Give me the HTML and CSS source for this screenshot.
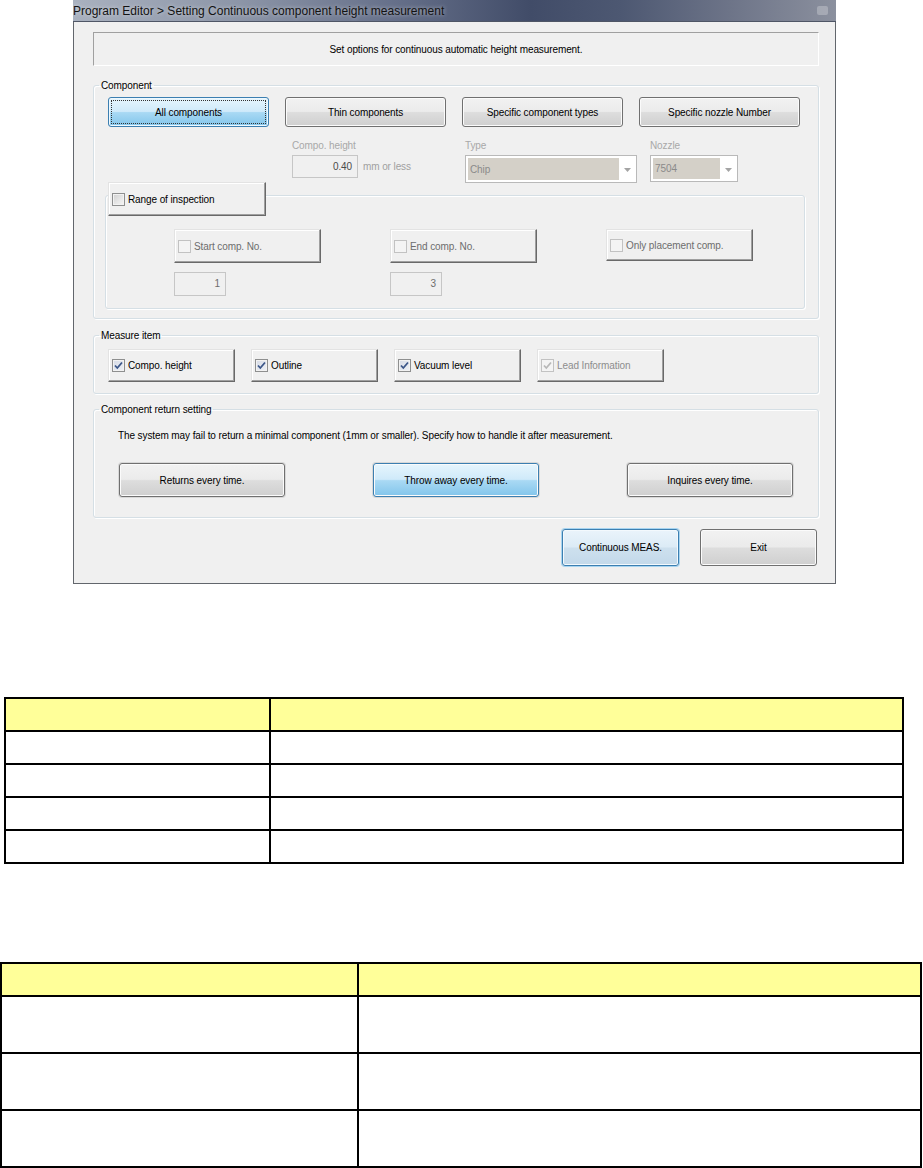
FILE: index.html
```html
<!DOCTYPE html>
<html lang="en">
<head>
  <meta charset="UTF-8" />
  <meta name="viewport" content="width=device-width, initial-scale=1.0"/>
  <title>Setting Continuous component height measurement</title>
  <link rel="stylesheet" href="styles.css">
</head>
<body>
  <div class="window">
    <div class="titlebar">
      <span class="title">Program Editor &gt; Setting Continuous component height measurement</span>
      <span class="close-btn"></span>
    </div>

    <div class="client">
      <div class="info">Set options for continuous automatic height measurement.</div>

      <fieldset class="group group-component">
        <legend>Component</legend>
        <div class="btn-row row-component">
          <button class="btn btn-hot btn-focus">All components</button>
          <button class="btn">Thin components</button>
          <button class="btn">Specific component types</button>
          <button class="btn">Specific nozzle Number</button>
        </div>

        <div class="field-row">
          <div class="field field-height">
            <div class="field-label">Compo. height</div>
            <div class="field-line">
              <span class="textbox textbox-height">0.40</span>
              <span class="unit">mm or less</span>
            </div>
          </div>
          <div class="field field-type">
            <div class="field-label">Type</div>
            <div class="combo combo-type">
              <span class="combo-value">Chip</span>
              <span class="combo-arrow"><svg width="7" height="4" viewBox="0 0 7 4"><path d="M0 0H7L3.5 4Z"/></svg></span>
            </div>
          </div>
          <div class="field field-nozzle">
            <div class="field-label">Nozzle</div>
            <div class="combo combo-nozzle">
              <span class="combo-value">7504</span>
              <span class="combo-arrow"><svg width="7" height="4" viewBox="0 0 7 4"><path d="M0 0H7L3.5 4Z"/></svg></span>
            </div>
          </div>
        </div>

        <fieldset class="group group-range">
          <legend class="push push-range"><span class="check"></span>Range of inspection</legend>
          <div class="range-grid">
            <div class="push push-off"><span class="check check-off"></span>Start comp. No.</div>
            <div class="push push-off"><span class="check check-off"></span>End comp. No.</div>
            <div class="push push-off push-short"><span class="check check-off"></span>Only placement comp.</div>
            <span class="textbox textbox-num">1</span>
            <span class="textbox textbox-num">3</span>
          </div>
        </fieldset>
      </fieldset>

      <fieldset class="group group-measure">
        <legend>Measure item</legend>
        <div class="btn-row row-measure">
          <div class="push push-item"><span class="check checked"><svg width="11" height="11" viewBox="0 0 11 11"><path d="M2 5.5L4.3 8L9 2.5"/></svg></span>Compo. height</div>
          <div class="push push-item"><span class="check checked"><svg width="11" height="11" viewBox="0 0 11 11"><path d="M2 5.5L4.3 8L9 2.5"/></svg></span>Outline</div>
          <div class="push push-item"><span class="check checked"><svg width="11" height="11" viewBox="0 0 11 11"><path d="M2 5.5L4.3 8L9 2.5"/></svg></span>Vacuum level</div>
          <div class="push push-item push-off"><span class="check checked check-off"><svg width="11" height="11" viewBox="0 0 11 11"><path d="M2 5.5L4.3 8L9 2.5"/></svg></span>Lead Information</div>
        </div>
      </fieldset>

      <fieldset class="group group-return">
        <legend>Component return setting</legend>
        <p class="return-note">The system may fail to return a minimal component (1mm or smaller). Specify how to handle it after measurement.</p>
        <div class="btn-row row-return">
          <button class="btn btn-big">Returns every time.</button>
          <button class="btn btn-big btn-hot">Throw away every time.</button>
          <button class="btn btn-big">Inquires every time.</button>
        </div>
      </fieldset>

      <div class="footer">
        <button class="btn btn-footer btn-default">Continuous MEAS.</button>
        <button class="btn btn-footer">Exit</button>
      </div>
    </div>
  </div>

  <table class="grid grid-one">
    <tr class="head"><td class="c1"></td><td></td></tr>
    <tr><td class="c1"></td><td></td></tr>
    <tr><td class="c1"></td><td></td></tr>
    <tr><td class="c1"></td><td></td></tr>
    <tr><td class="c1"></td><td></td></tr>
  </table>

  <table class="grid grid-two">
    <tr class="head"><td class="c1"></td><td></td></tr>
    <tr class="tall"><td class="c1"></td><td></td></tr>
    <tr class="tall"><td class="c1"></td><td></td></tr>
    <tr class="tall"><td class="c1"></td><td></td></tr>
  </table>
</body>
</html>
```

FILE: styles.css
```css
body {
  margin: 0;
  padding: 0;
  background: #fff;
  font-family: "Liberation Sans", Arial, sans-serif;
}

/* dialog window */

.window {
  width: 763px;
  margin-left: 73px;
  box-sizing: border-box;
  border: 1px solid #62666c;
  border-top: none;
  background: #f0f0f0;
  font-size: 10px;
  letter-spacing: -0.1px;
  color: #000;
}

.titlebar {
  height: 21px;
  margin: 0 -1px;
  border-bottom: 1px solid #4f5666;
  background: linear-gradient(90deg, #a9b1bf 0%, #8c95a7 22%, #66708a 42%, #414c68 60%, #4d5872 72%, #6d7488 86%, #8b909e 100%);
  display: flex;
  align-items: center;
  justify-content: space-between;
}

.title {
  font-size: 12px;
  letter-spacing: 0;
  color: #121212;
  text-shadow: 0 0 4px rgba(255, 255, 255, 0.6);
  padding-left: 0;
}

.close-btn {
  width: 11px;
  height: 9px;
  margin-right: 8px;
  border-radius: 2px;
  background: rgba(255, 255, 255, 0.25);
}

.client {
  padding: 10px 16px 17px 19px;
}

.info {
  height: 34px;
  box-sizing: border-box;
  border: 1px solid;
  border-color: #a0a0a0 #fff #fff #a0a0a0;
  display: flex;
  align-items: center;
  justify-content: center;
}

/* group boxes */

.group {
  margin: 0;
  padding: 0;
  border: 1px solid #d5dfe5;
  border-radius: 3px;
  box-shadow: inset 1px 1px 0 #fff, 1px 1px 0 #fff;
  min-width: 0;
}

.group > legend {
  margin-left: 5px;
  padding: 0 2px;
  line-height: 13px;
}

.group-component {
  margin-top: 13px;
  padding-bottom: 9px;
}

.group-measure {
  margin-top: 10px;
  padding: 7px 0 11px;
}

.group-return {
  margin-top: 9px;
  padding-bottom: 20px;
}

.btn-row {
  display: flex;
}

.row-component {
  margin-top: 5px;
  padding-left: 14px;
  gap: 16px;
}

.row-measure {
  padding-left: 14px;
  gap: 16px;
}

.row-return {
  margin-top: 21px;
  padding-left: 25px;
  gap: 88px;
}

/* buttons */

.btn {
  font: inherit;
  letter-spacing: inherit;
  color: #000;
  padding: 0;
  width: 161px;
  height: 30px;
  border: 1px solid #707070;
  border-radius: 3px;
  background: linear-gradient(#f2f2f2 0%, #ebebeb 48%, #dddddd 52%, #cfcfcf 100%);
  box-shadow: inset 0 0 0 1px #fbfbfb;
}

.btn-hot {
  border-color: #3c7fb1;
  background: linear-gradient(#e6f5fd 0%, #cfeafa 48%, #a9d9f4 52%, #82c5eb 100%);
  box-shadow: inset 0 0 0 1px #eef8fe;
}

.btn-focus {
  outline: 1px dotted #333;
  outline-offset: -4px;
}

.btn-big {
  width: 166px;
  height: 34px;
  box-shadow: inset 0 0 0 1px #fbfbfb, 0 0 0 1px #d8d8d8;
}

.btn-footer {
  width: 117px;
  height: 37px;
}

.btn-default {
  border-color: #3c7fb1;
  background: linear-gradient(#eaf4fb 0%, #dcebf6 48%, #cde0ee 52%, #c3d9ea 100%);
  box-shadow: inset 0 0 0 1px #f3f9fd, 0 0 0 1px #a7d4f0;
}

/* push-like check buttons */

.push {
  display: flex;
  align-items: center;
  box-sizing: border-box;
  padding-left: 3px;
  background: #f0f0f0;
  border: 1px solid;
  border-color: #e3e3e3 #696969 #696969 #e3e3e3;
  box-shadow: inset -1px -1px 0 #a0a0a0, inset 1px 1px 0 #fff;
  white-space: nowrap;
}

.push-item {
  width: 127px;
  height: 33px;
}

.push-off {
  color: #6d6d6d;
}

.push-item.push-off {
  color: #8d8d8d;
}

.check {
  width: 13px;
  height: 13px;
  box-sizing: border-box;
  margin-right: 3px;
  border: 1px solid #8e8f8f;
  background: linear-gradient(135deg, #cfcfcf 0%, #e8e8e8 60%, #f6f6f6 100%);
  box-shadow: inset 0 0 0 1px #f2f2f2;
  display: flex;
  align-items: center;
  justify-content: center;
  flex-shrink: 0;
}

.check.checked {
  background: linear-gradient(135deg, #d6dbe6 0%, #eef1f6 100%);
}

.check svg path {
  fill: none;
  stroke: #3b5689;
  stroke-width: 1.8;
}

.check-off {
  border-color: #c2c2c2;
  background: #f4f4f4;
  box-shadow: none;
}

.check.checked.check-off {
  background: #f4f4f4;
}

.check-off svg path {
  stroke: #b8b8b8;
}

/* fields above range group */

.field-row {
  display: flex;
  margin-top: 12px;
  margin-bottom: -5px;
  padding-left: 198px;
}

.field-label {
  line-height: 13px;
  margin-bottom: 3px;
  color: #a8a8a8;
}

.field-height {
  width: 173px;
}

.field-type {
  width: 185px;
}

.field-nozzle {
  width: 88px;
}

.field-line {
  display: flex;
  align-items: center;
}

.textbox {
  box-sizing: border-box;
  border: 1px solid #c6c6c6;
  background: #f0f0f0;
  color: #6d6d6d;
  text-align: right;
  padding-right: 5px;
}

.textbox-height {
  width: 66px;
  height: 23px;
  line-height: 21px;
  color: #4a4a4a;
}

.unit {
  margin-left: 5px;
  color: #a0a0a0;
}

.combo {
  display: flex;
  height: 28px;
  box-sizing: border-box;
  border: 1px solid #b9b9b9;
  background: #fff;
  padding: 2px 0 2px 2px;
}

.combo-type {
  width: 172px;
}

.combo-nozzle {
  width: 88px;
  height: 27px;
}

.combo-value {
  flex: 1;
  background: #d4d0c8;
  color: #8a8a8a;
  padding-left: 2px;
  display: flex;
  align-items: center;
}

.combo-arrow {
  width: 17px;
  display: flex;
  align-items: center;
  justify-content: center;
  padding-top: 2px;
}

.combo-arrow svg path {
  fill: #a4a4a4;
}

/* range of inspection group: the check button sits over the top border */

.group-range {
  margin: 0 13px 0 11px;
  padding: 17px 0 12px;
}

.group-range > legend.push-range {
  position: relative;
  top: 4px;
  width: 158px;
  height: 34px;
  margin: 0 0 0 2px;
  padding: 0 0 0 3px;
  line-height: normal;
}

.range-grid {
  display: grid;
  grid-template-columns: 147px 147px 147px;
  grid-template-rows: 34px 24px;
  column-gap: 69px;
  row-gap: 9px;
  margin-left: 68px;
}

.push-short {
  height: 32px;
}

.textbox-num {
  width: 52px;
  line-height: 22px;
}

/* return group */

.return-note {
  margin: 13px 0 0 24px;
  line-height: 13px;
}

.footer {
  display: flex;
  justify-content: flex-end;
  gap: 21px;
  margin-top: 11px;
  padding-right: 2px;
}

/* tables below the dialog */

.grid {
  border-collapse: collapse;
  table-layout: fixed;
}

.grid td {
  border: 2px solid #000;
  padding: 0;
}

.grid .head td {
  background: #ffff99;
}

.grid-one {
  width: 900px;
  margin: 113px 0 0 4px;
}

.grid-one tr {
  height: 33px;
}

.grid-one .c1 {
  width: 263px;
}

.grid-two {
  width: 922px;
  margin: 98px 0 0 0;
}

.grid-two tr {
  height: 33px;
}

.grid-two tr.tall {
  height: 57px;
}

.grid-two .c1 {
  width: 355px;
}
```
